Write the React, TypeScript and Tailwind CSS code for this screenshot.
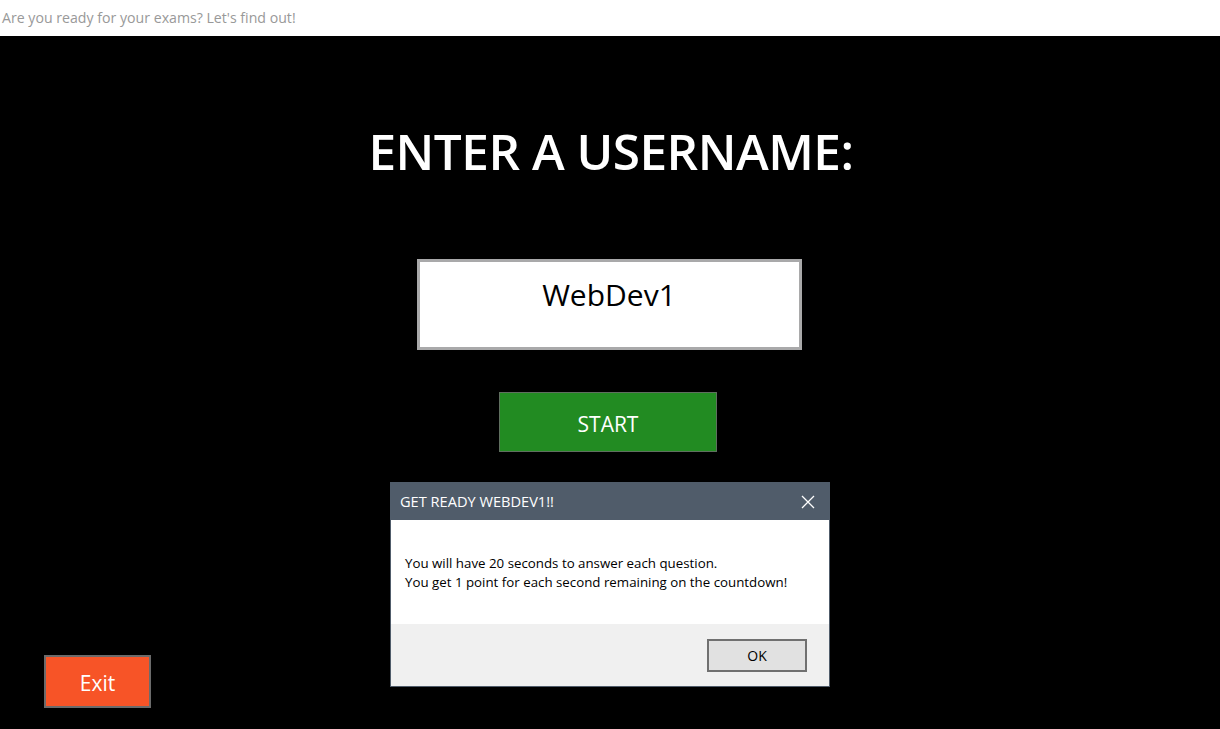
import React from "react";

export default function App() {
  const font = { fontFamily: '"Open Sans", "Noto Sans", sans-serif' };
  return (
    <div className="relative w-[1220px] h-[729px] overflow-hidden bg-black" style={font}>
      <div className="h-[36px] bg-white flex items-center pl-[2px]">
        <span className="text-[14.15px] text-[#999999] leading-none">Are you ready for your exams? Let's find out!</span>
      </div>
      <main className="h-[693px] flex flex-col items-center pr-[2px]">
        <h1 className="mt-[90px] ml-[4px] text-[49.5px] leading-[50px] font-semibold text-white tracking-[-0.5px]">ENTER A USERNAME:</h1>
        <div className="mt-[83px] w-[385px] h-[91px] border-[3px] border-[#a9a9aa] bg-white flex items-center justify-center">
          <span className="text-[30px] text-black leading-none -mt-[20px]">WebDev1</span>
        </div>
        <button className="mt-[42px] mr-[2px] w-[218px] h-[60px] bg-[#228b22] border border-[#5f6f5f] text-white text-[21px] flex items-center justify-center pt-[5px]">
          START
        </button>
        <button className="mt-auto mb-[21px] self-start ml-[44px] w-[107px] h-[53px] bg-[#f75427] border-2 border-[#6b6b6b] text-white text-[21px] flex items-center justify-center pt-[5px]">
          Exit
        </button>
      </main>
      <div className="absolute left-[390px] top-[482px] w-[440px] h-[205px] border border-[#505c6a] flex flex-col bg-white">
        <div className="h-[37px] bg-[#505c6a] flex items-center justify-between pl-[9px] pr-[14px]">
          <span className="text-white text-[14.6px]">GET READY WEBDEV1!!</span>
          <svg width="14" height="14" viewBox="0 0 14 14">
            <path d="M1 1L13 13M13 1L1 13" stroke="white" strokeWidth="1.3" />
          </svg>
        </div>
        <div className="h-[104px] bg-white pl-[14px] pt-[34px] text-[13.3px] leading-[19px] text-black">
          <div>You will have 20 seconds to answer each question.</div>
          <div>You get 1 point for each second remaining on the countdown!</div>
        </div>
        <div className="flex-1 bg-[#f0f0f0] flex justify-end items-start pt-[15px] pr-[22px]">
          <button className="w-[100px] h-[33px] bg-[#e1e1e1] border-2 border-[#707070] text-[14px] text-black flex items-center justify-center">
            OK
          </button>
        </div>
      </div>
    </div>
  );
}
